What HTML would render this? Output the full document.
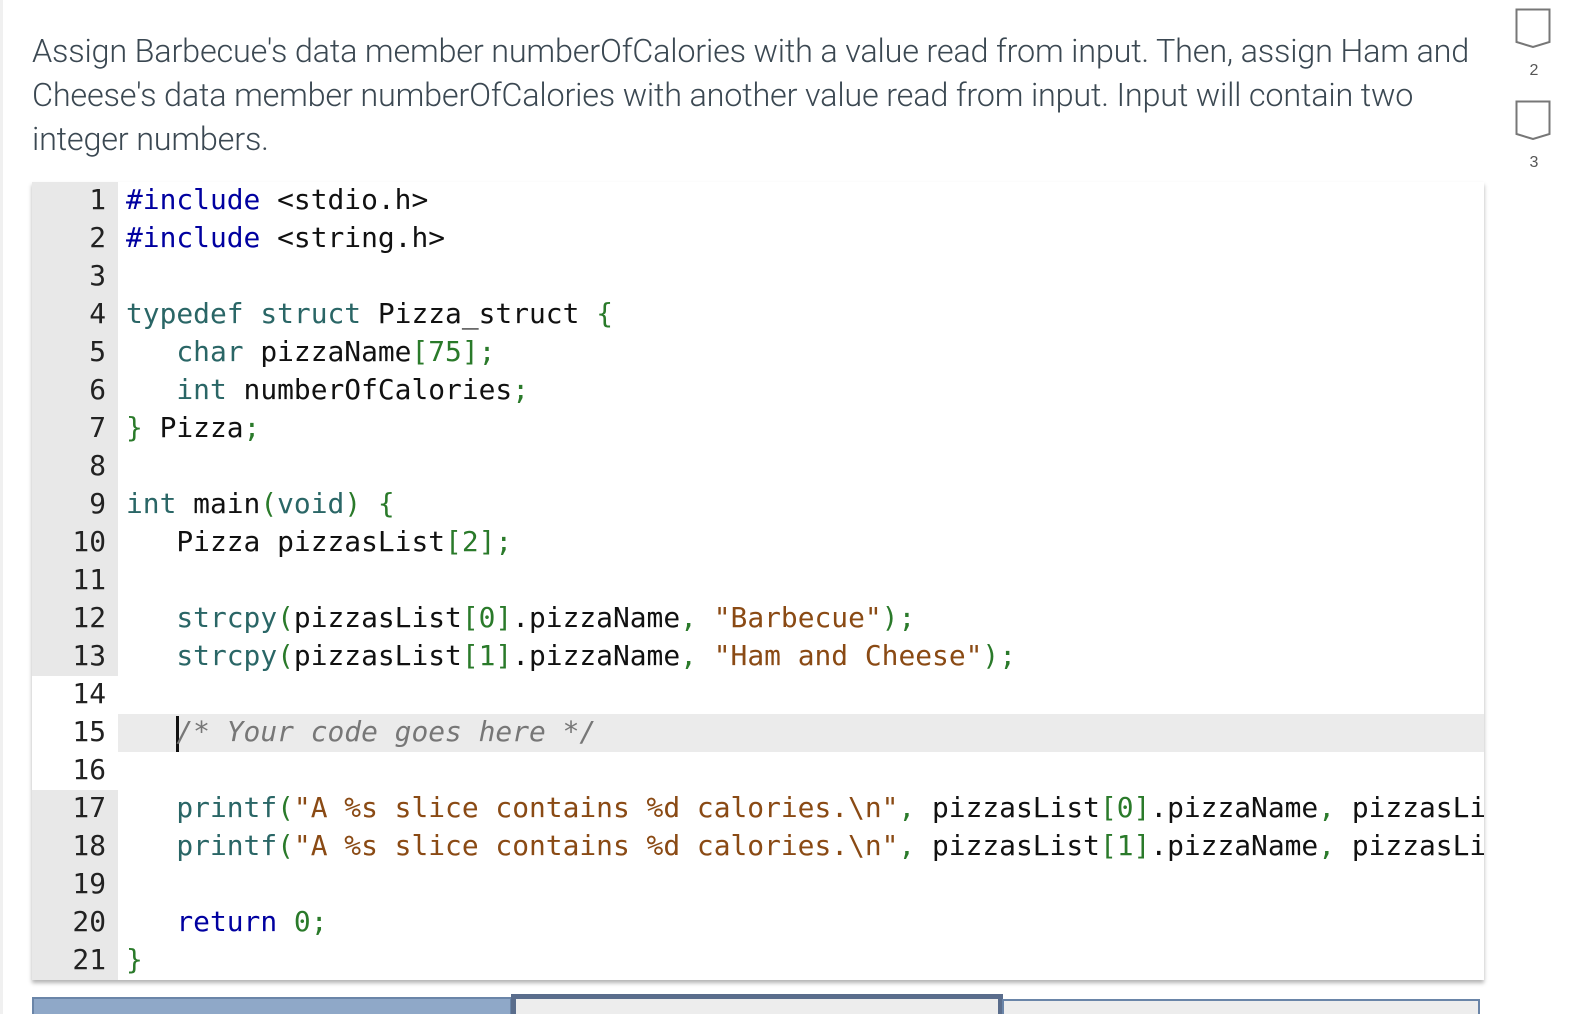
<!DOCTYPE html>
<html><head><meta charset="utf-8"><style>
html,body{margin:0;padding:0;background:#fff;width:1570px;height:1014px;overflow:hidden;position:relative}
.strip{position:absolute;left:0;top:0;width:3px;height:1014px;background:#f0f0f0}
.prompt{position:absolute;left:32px;top:29px;width:1450px;font-family:"Roboto","Liberation Sans",sans-serif;font-weight:300;font-size:32.4px;line-height:44px;color:#3b4852;letter-spacing:-0.2px}
.ed{position:absolute;left:32px;top:182px;width:1452px;height:798px;box-shadow:0 3px 4px rgba(0,0,0,0.3);background:#fff;overflow:hidden}
.gut{position:absolute;left:0;top:0;width:86px;height:798px;background:#e8e8e8}
.gw{position:absolute;left:0;top:494px;width:86px;height:114px;background:#fff}
.hl{position:absolute;left:86px;top:532px;width:1366px;height:38px;background:#ebebeb}
.cur{position:absolute;left:144px;top:534px;width:3px;height:36px;background:#111}
pre{margin:0;position:absolute;top:-1px;font-family:"DejaVu Sans Mono","Liberation Mono",monospace;font-size:27.9px;line-height:38px;color:#111}
.num{left:0;width:74px;text-align:right;color:#222}
.code{left:94px}
.k{color:#2a6666}.b{color:#0000a0}.p{color:#2a7a2a}.s{color:#8a4a14}.c{color:#777;font-style:italic}
.tab{position:absolute;top:997px;height:20px;box-sizing:border-box}
.side{position:absolute;left:1515px;width:36px;height:40px}
.sn{position:absolute;left:1526px;width:16px;text-align:center;font-family:"Liberation Sans",sans-serif;font-size:16px;color:#555}
</style></head><body>
<div class="strip"></div>
<div class="prompt">Assign Barbecue's data member numberOfCalories with a value read from input. Then, assign Ham and Cheese's data member numberOfCalories with another value read from input. Input will contain two integer numbers.</div>
<div class="ed">
<div class="gut"></div><div class="gw"></div><div class="hl"></div><div class="cur"></div>
<pre class="num">1
2
3
4
5
6
7
8
9
10
11
12
13
14
15
16
17
18
19
20
21</pre>
<pre class="code"><span class="b">#include</span> &lt;stdio.h&gt;
<span class="b">#include</span> &lt;string.h&gt;

<span class="k">typedef</span> <span class="k">struct</span> Pizza_struct <span class="p">{</span>
   <span class="k">char</span> pizzaName<span class="p">[75];</span>
   <span class="k">int</span> numberOfCalories<span class="p">;</span>
<span class="p">}</span> Pizza<span class="p">;</span>

<span class="k">int</span> main<span class="p">(</span><span class="k">void</span><span class="p">)</span> <span class="p">{</span>
   Pizza pizzasList<span class="p">[2];</span>

   <span class="k">strcpy</span><span class="p">(</span>pizzasList<span class="p">[0]</span>.pizzaName<span class="p">,</span> <span class="s">"Barbecue"</span><span class="p">);</span>
   <span class="k">strcpy</span><span class="p">(</span>pizzasList<span class="p">[1]</span>.pizzaName<span class="p">,</span> <span class="s">"Ham and Cheese"</span><span class="p">);</span>

   <span class="c">/* Your code goes here */</span>

   <span class="k">printf</span><span class="p">(</span><span class="s">"A %s slice contains %d calories.\n"</span><span class="p">,</span> pizzasList<span class="p">[0]</span>.pizzaName<span class="p">,</span> pizzasList<span class="p">[0]</span>.numberOfCalories<span class="p">);</span>
   <span class="k">printf</span><span class="p">(</span><span class="s">"A %s slice contains %d calories.\n"</span><span class="p">,</span> pizzasList<span class="p">[1]</span>.pizzaName<span class="p">,</span> pizzasList<span class="p">[1]</span>.numberOfCalories<span class="p">);</span>

   <span class="b">return</span> <span class="p">0;</span>
<span class="p">}</span></pre>
</div>
<div class="tab" style="left:32px;width:480px;background:#8fa8c8;border:2px solid #6a85a8;border-bottom:none"></div>
<div class="tab" style="left:511px;top:994px;width:492px;background:#ededed;border:5px solid #5a6d8c;border-bottom:none"></div>
<div class="tab" style="left:1002px;top:999px;width:478px;background:#ededed;border:2px solid #6a85a8;border-bottom:none"></div>
<svg class="side" style="top:8px" viewBox="0 0 36 40"><path d="M1.5 1.5H34.5V34L18 39L1.5 34Z" fill="none" stroke="#777" stroke-width="2"/></svg>
<div class="sn" style="top:62px">2</div>
<svg class="side" style="top:100px" viewBox="0 0 36 40"><path d="M1.5 1.5H34.5V34L18 39L1.5 34Z" fill="none" stroke="#777" stroke-width="2"/></svg>
<div class="sn" style="top:154px">3</div>
</body></html>
